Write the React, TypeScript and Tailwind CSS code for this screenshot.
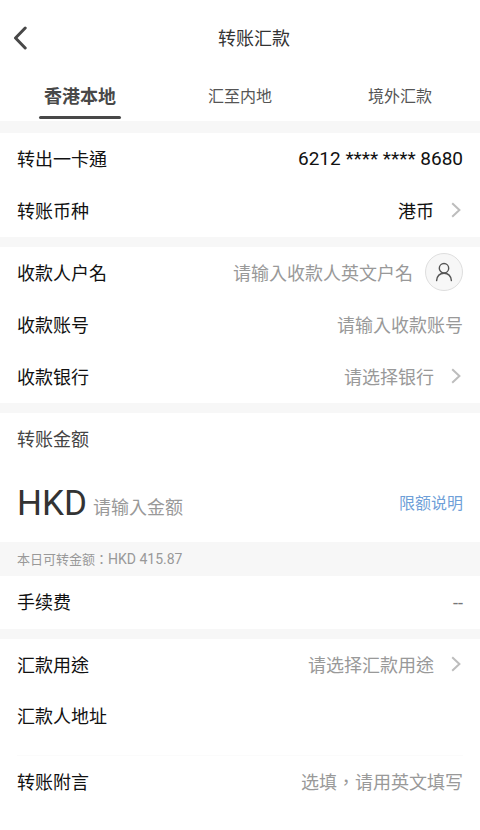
import type { ReactNode } from "react";

function Chevron() {
  return (
    <svg aria-hidden="true" className="mb-1 ml-4 mr-px h-4 w-3 shrink-0" viewBox="0 0 12 16" fill="none" stroke="#bdbdbd" strokeWidth="2">
      <path d="M2.2 1.2 9.4 8 2.2 14.8" />
    </svg>
  );
}

function Row({ id, label, children }: { id: string; label: string; children?: ReactNode }) {
  return (
    <div className="flex h-[52px] items-center pt-0.5">
      <label htmlFor={id} className="shrink-0 text-[#111111]">
        {label}
      </label>
      {children}
    </div>
  );
}

const field =
  "ml-4 w-0 min-w-0 flex-1 appearance-none bg-transparent text-right outline-none placeholder:text-[#999999] placeholder:opacity-100";
const select = "ml-4 w-0 min-w-0 flex-1 appearance-none bg-transparent outline-none [text-align-last:right]";

function Section({ children }: { children: ReactNode }) {
  return <section className="bg-white px-[17px]">{children}</section>;
}

export default function App() {
  return (
    <form className="flex min-h-screen flex-col bg-white font-[Roboto,'Noto_Sans_CJK_TC',sans-serif] text-lg leading-6">
      <header className="flex h-[76px] items-center">
        <button type="button" aria-label="返回" className="w-7 pl-3">
          <svg aria-hidden="true" className="h-6 w-4" viewBox="0 0 16 24" fill="none" stroke="#484848" strokeWidth="3" strokeLinecap="round" strokeLinejoin="round">
            <path d="M13.2 2 3.5 12l9.7 10" />
          </svg>
        </button>
        <h1 className="flex-1 pt-0.5 text-center text-[#333333]">转账汇款</h1>
      </header>
      <nav className="grid h-[45px] grid-cols-3 text-base leading-6 text-[#555555]">
        <button type="button" className="flex flex-col items-center pt-[9px] text-lg leading-6 font-bold text-[#484848]">
          香港本地
          <span className="mt-[7px] h-[3px] w-[82px] rounded-full bg-[#484848]" />
        </button>
        <button type="button" className="flex flex-col items-center pt-[9px]">汇至内地</button>
        <button type="button" className="flex flex-col items-center pt-[9px]">境外汇款</button>
      </nav>
      <main className="flex flex-col gap-[10px] bg-[#f7f7f7] pt-3">
        <Section>
          <Row id="card" label="转出一卡通">
            <output id="card" className="mb-0.5 flex-1 text-right text-[19px] text-[#111111]">6212 **** **** 8680</output>
          </Row>
          <Row id="currency" label="转账币种">
            <select id="currency" className={select + " text-[#111111]"}>
              <option>港币</option>
            </select>
            <Chevron />
          </Row>
        </Section>
        <Section>
          <Row id="payee" label="收款人户名">
            <input id="payee" className={field} placeholder="请输入收款人英文户名" />
            <button type="button" aria-label="选择收款人" className="mb-1 ml-3 grid size-[38px] shrink-0 place-items-center rounded-full border border-[#dedede] bg-[#f7f7f7]">
              <svg aria-hidden="true" className="size-5" viewBox="0 0 20 20" fill="none" stroke="#555555" strokeWidth="1.4" strokeLinecap="round">
                <circle cx="10" cy="6.2" r="4.7" />
                <path d="M2.6 18.6c.5-4.5 3.4-7.3 7.4-7.3s6.900 2.800 7.400 7.300" />
              </svg>
            </button>
          </Row>
          <Row id="account" label="收款账号">
            <input id="account" className={field} placeholder="请输入收款账号" />
          </Row>
          <Row id="bank" label="收款银行">
            <select id="bank" className={select + " text-[#999999]"}>
              <option>请选择银行</option>
            </select>
            <Chevron />
          </Row>
        </Section>
        <div>
          <Section>
            <label htmlFor="amount" className="flex h-[52px] items-center pt-0.5 text-[#444444]">转账金额</label>
            <div className="flex h-[77px] items-center pt-px">
              <span className="text-[35px] leading-10 text-[#333333]">HKD</span>
              <input
                id="amount"
                className="mt-2 ml-[6px] w-0 min-w-0 flex-1 bg-transparent outline-none placeholder:text-[#999999] placeholder:opacity-100"
                placeholder="请输入金额"
              />
              <a href="#limit" className="text-base leading-6 text-[#6f9fd8]">限额说明</a>
            </div>
          </Section>
          <p className="flex h-[34px] items-center px-[17px] text-[13px] text-[#999999]">
            <span>
              本日可转金额：<span className="text-sm leading-6">HKD 415.87</span>
            </span>
          </p>
          <Section>
            <div className="pb-px">
              <Row id="fee" label="手续费">
                <output id="fee" className="flex-1 text-right text-[#777777]">--</output>
              </Row>
            </div>
          </Section>
        </div>
        <Section>
          <Row id="purpose" label="汇款用途">
            <select id="purpose" className={select + " text-[#999999]"}>
              <option>请选择汇款用途</option>
            </select>
            <Chevron />
          </Row>
          <div className="flex border-b border-[#fbfbfb] pt-[14px] pb-[26px]">
            <label htmlFor="address" className="shrink-0 text-[#111111]">汇款人地址</label>
            <input id="address" className={field} />
          </div>
          <Row id="note" label="转账附言">
            <input id="note" className={field} placeholder="选填，请用英文填写" />
          </Row>
        </Section>
      </main>
    </form>
  );
}
